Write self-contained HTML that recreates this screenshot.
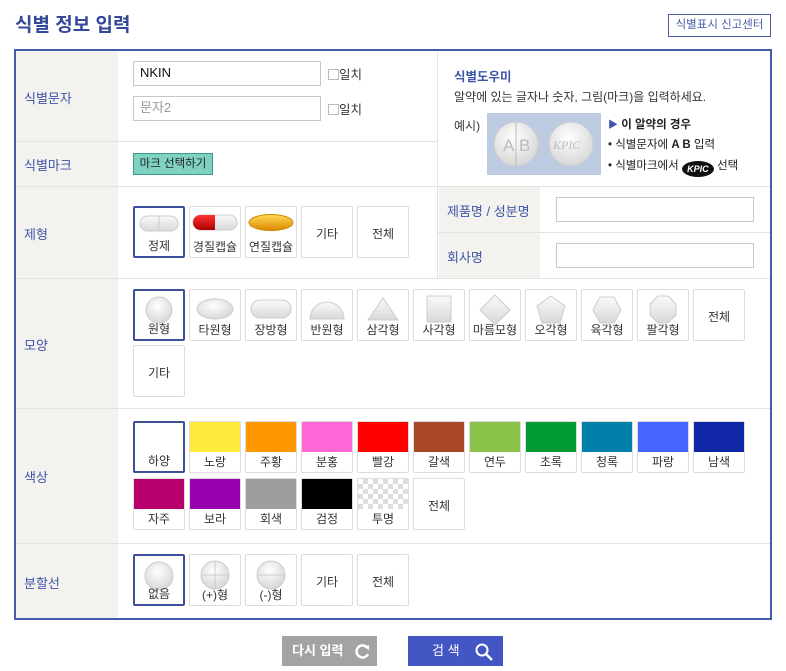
<!DOCTYPE html>
<html><head><meta charset="utf-8"><style>
*{margin:0;padding:0;box-sizing:border-box}
body{width:786px;height:671px;background:#fff;font-family:"Liberation Sans","Noto Sans CJK KR",sans-serif;position:relative;overflow:hidden;color:#333}
.a{position:absolute}
.lbl{position:absolute;left:24px;font-size:13px;color:#3d55a8}
.b{position:absolute;width:52px;height:52px;border:1px solid #dcdcdc;border-radius:2px;background:#fff;font-size:12px;color:#333;text-align:center}
.b.s{border:2px solid #3d4f9c}
.b .t{position:absolute;left:0;right:0;bottom:3px;line-height:14px}
.b .c{position:absolute;left:0;right:0;top:18px;font-size:12px}
.b svg{position:absolute;left:50%;top:4px;transform:translateX(-50%)}
.sw{position:absolute;left:0;right:0;top:0;height:30px}
.hl{position:absolute;height:1px;background:#e2e2e2}
.inp{position:absolute;border:1px solid #c8c8c8;background:#fff;font-size:13px;padding-left:6px;line-height:22px}
</style></head><body>
<svg width="0" height="0" style="position:absolute"><defs>
<radialGradient id="g" cx="45%" cy="35%" r="70%"><stop offset="0" stop-color="#fff"/><stop offset="1" stop-color="#d4d4d4"/></radialGradient>
<linearGradient id="lg" x1="0" y1="0" x2="0" y2="1"><stop offset="0" stop-color="#fafafa"/><stop offset="1" stop-color="#d8d8d8"/></linearGradient>
</defs></svg>

<div class="a" style="left:15px;top:10px;font-size:19px;font-weight:bold;color:#34499a">식별 정보 입력</div>
<div class="a" style="left:668px;top:14px;width:103px;height:23px;border:1px solid #4a5ea8;font-size:11.5px;color:#4a5ea8;text-align:center;line-height:21px">식별표시 신고센터</div>

<div class="a" style="left:14px;top:49px;width:758px;height:571px;border:2px solid #4559ad"></div>
<div class="a" style="left:16px;top:51px;width:102px;height:567px;background:#f4f2ee"></div>
<div class="a" style="left:439px;top:186px;width:101px;height:92px;background:#f4f2ee"></div>
<div class="a" style="left:437px;top:51px;width:1px;height:227px;background:#e2e2e2"></div>
<div class="hl" style="left:16px;top:141px;width:421px"></div>
<div class="hl" style="left:16px;top:186px;width:754px"></div>
<div class="hl" style="left:438px;top:232px;width:332px"></div>
<div class="hl" style="left:16px;top:278px;width:754px"></div>
<div class="hl" style="left:16px;top:408px;width:754px"></div>
<div class="hl" style="left:16px;top:543px;width:754px"></div>

<div class="lbl" style="top:88px">식별문자</div>
<div class="lbl" style="top:155px">식별마크</div>
<div class="lbl" style="top:224px">제형</div>
<div class="lbl" style="top:335px">모양</div>
<div class="lbl" style="top:467px">색상</div>
<div class="lbl" style="top:573px">분할선</div>

<div class="inp" style="left:133px;top:61px;width:188px;height:25px;color:#111">NKIN</div>
<div class="inp" style="left:133px;top:96px;width:188px;height:25px;color:#999">문자2</div>
<div class="a" style="left:328px;top:64px;font-size:12.5px"><span style="display:inline-block;width:11px;height:11px;border:1px solid #bbb;vertical-align:-1px"></span>일치</div>
<div class="a" style="left:328px;top:99px;font-size:12.5px"><span style="display:inline-block;width:11px;height:11px;border:1px solid #bbb;vertical-align:-1px"></span>일치</div>
<div class="a" style="left:133px;top:153px;width:80px;height:22px;background:#7fd1c2;border:1px solid #3a9a88;font-size:11.5px;line-height:20px;text-align:center;color:#222">마크 선택하기</div>

<div class="a" style="left:454px;top:66px;font-size:12.5px;font-weight:bold;color:#3d55a8">식별도우미</div>
<div class="a" style="left:454px;top:88px;font-size:12px;color:#333">알약에 있는 글자나 숫자, 그림(마크)을 입력하세요.</div>
<div class="a" style="left:454px;top:117px;font-size:12px">예시)</div>
<div class="a" style="left:487px;top:113px;width:114px;height:62px;background:#bccbe2">
<svg width="114" height="62"><circle cx="29" cy="31" r="22" fill="url(#g)" stroke="#ccc"/><line x1="29" y1="9" x2="29" y2="53" stroke="#bbb"/><text x="16" y="38" font-size="17" fill="#bbb" font-family="Liberation Sans">A</text><text x="32" y="38" font-size="17" fill="#bbb" font-family="Liberation Sans">B</text><circle cx="84" cy="31" r="22" fill="url(#g)" stroke="#ccc"/><text x="66" y="36" font-size="12" fill="#bbb" font-style="italic" font-family="Liberation Serif">KPIC</text></svg></div>
<div class="a" style="left:608px;top:116px;font-size:11.5px;font-weight:bold;color:#222"><span style="color:#3d55a8;font-size:10px">▶</span> 이 알약의 경우</div>
<div class="a" style="left:608px;top:136px;font-size:11.5px;color:#222">• 식별문자에 <b>A B</b> 입력</div>
<div class="a" style="left:608px;top:157px;font-size:11.5px;color:#222">• 식별마크에서 <span style="display:inline-block;width:32px;height:16px;background:#111;color:#fff;border-radius:50%;font-size:9px;font-style:italic;text-align:center;line-height:16px;vertical-align:-3px;font-weight:bold">KPIC</span> 선택</div>

<div class="a" style="left:447px;top:201px;font-size:13px;color:#3d55a8">제품명 / 성분명</div>
<div class="a" style="left:447px;top:247px;font-size:13px;color:#3d55a8">회사명</div>
<div class="inp" style="left:556px;top:197px;width:198px;height:25px"></div>
<div class="inp" style="left:556px;top:243px;width:198px;height:25px"></div>

<!-- 제형 -->
<div class="b s" style="left:133px;top:206px"><svg width="42" height="22"><rect x="2" y="4" width="38" height="15" rx="7.5" fill="url(#lg)" stroke="#ccc"/><line x1="21" y1="4" x2="21" y2="19" stroke="#ccc"/></svg><div class="t">정제</div></div>
<div class="b" style="left:189px;top:206px"><svg width="48" height="22"><defs><linearGradient id="r" x1="0" y1="0" x2="0" y2="1"><stop offset="0" stop-color="#f33"/><stop offset="1" stop-color="#a00"/></linearGradient></defs><rect x="2" y="4" width="44" height="15" rx="7.5" fill="url(#lg)" stroke="#ccc"/><path d="M9.5 4H24V19H9.5A7.5 7.5 0 0 1 9.5 4Z" fill="url(#r)"/></svg><div class="t">경질캡슐</div></div>
<div class="b" style="left:245px;top:206px"><svg width="48" height="22"><defs><linearGradient id="y" x1="0" y1="0" x2="0" y2="1"><stop offset="0" stop-color="#fd5"/><stop offset="1" stop-color="#d80"/></linearGradient></defs><ellipse cx="24" cy="11.5" rx="22" ry="8" fill="url(#y)" stroke="#c80"/></svg><div class="t">연질캡슐</div></div>
<div class="b" style="left:301px;top:206px"><div class="c">기타</div></div>
<div class="b" style="left:357px;top:206px"><div class="c">전체</div></div>

<!-- 모양 -->
<div class="b s" style="left:133px;top:289px"><svg width="30" height="30"><ellipse cx="15" cy="15" rx="13" ry="13" fill="url(#g)" stroke="#ccc"/></svg><div class="t">원형</div></div>
<div class="b" style="left:189px;top:289px"><svg width="40" height="30"><ellipse cx="20" cy="15" rx="18" ry="10" fill="url(#g)" stroke="#ccc"/></svg><div class="t">타원형</div></div>
<div class="b" style="left:245px;top:289px"><svg width="44" height="30"><rect x="2" y="6" width="40" height="18" rx="9" fill="url(#lg)" stroke="#ccc"/></svg><div class="t">장방형</div></div>
<div class="b" style="left:301px;top:289px"><svg width="40" height="30"><path d="M3 25A17 17 0 0 1 37 25Z" fill="url(#lg)" stroke="#ccc"/></svg><div class="t">반원형</div></div>
<div class="b" style="left:357px;top:289px"><svg width="34" height="30"><path d="M17 4L32 26H2Z" fill="url(#lg)" stroke="#ccc"/></svg><div class="t">삼각형</div></div>
<div class="b" style="left:413px;top:289px"><svg width="30" height="30"><rect x="3" y="2" width="24" height="26" fill="url(#lg)" stroke="#ccc"/></svg><div class="t">사각형</div></div>
<div class="b" style="left:469px;top:289px"><svg width="34" height="32"><path d="M17 1L32 16L17 31L2 16Z" fill="url(#lg)" stroke="#ccc"/></svg><div class="t">마름모형</div></div>
<div class="b" style="left:525px;top:289px"><svg width="34" height="32"><path d="M17 2L31 12L26 29H8L3 12Z" fill="url(#lg)" stroke="#ccc"/></svg><div class="t">오각형</div></div>
<div class="b" style="left:581px;top:289px"><svg width="34" height="32"><path d="M10 3H24L31 16L24 29H10L3 16Z" fill="url(#lg)" stroke="#ccc"/></svg><div class="t">육각형</div></div>
<div class="b" style="left:637px;top:289px"><svg width="32" height="32"><path d="M11 2H21L29 10V21L21 29H11L3 21V10Z" fill="url(#lg)" stroke="#ccc"/></svg><div class="t">팔각형</div></div>
<div class="b" style="left:693px;top:289px"><div class="c">전체</div></div>
<div class="b" style="left:133px;top:345px"><div class="c">기타</div></div>

<!-- 색상 -->
<div class="b s" style="left:133px;top:421px"><div class="t">하양</div></div>
<div class="b" style="left:189px;top:421px"><div class="sw" style="background:#ffeb3b"></div><div class="t">노랑</div></div>
<div class="b" style="left:245px;top:421px"><div class="sw" style="background:#ff9800"></div><div class="t">주황</div></div>
<div class="b" style="left:301px;top:421px"><div class="sw" style="background:#ff66d6"></div><div class="t">분홍</div></div>
<div class="b" style="left:357px;top:421px"><div class="sw" style="background:#ff0000"></div><div class="t">빨강</div></div>
<div class="b" style="left:413px;top:421px"><div class="sw" style="background:#a84727"></div><div class="t">갈색</div></div>
<div class="b" style="left:469px;top:421px"><div class="sw" style="background:#8bc34a"></div><div class="t">연두</div></div>
<div class="b" style="left:525px;top:421px"><div class="sw" style="background:#009933"></div><div class="t">초록</div></div>
<div class="b" style="left:581px;top:421px"><div class="sw" style="background:#0080a8"></div><div class="t">청록</div></div>
<div class="b" style="left:637px;top:421px"><div class="sw" style="background:#4466ff"></div><div class="t">파랑</div></div>
<div class="b" style="left:693px;top:421px"><div class="sw" style="background:#1027a8"></div><div class="t">남색</div></div>
<div class="b" style="left:133px;top:478px"><div class="sw" style="background:#b5006e"></div><div class="t">자주</div></div>
<div class="b" style="left:189px;top:478px"><div class="sw" style="background:#9900b0"></div><div class="t">보라</div></div>
<div class="b" style="left:245px;top:478px"><div class="sw" style="background:#9e9e9e"></div><div class="t">회색</div></div>
<div class="b" style="left:301px;top:478px"><div class="sw" style="background:#000"></div><div class="t">검정</div></div>
<div class="b" style="left:357px;top:478px"><div class="sw" style="background-color:#fff;background-image:linear-gradient(45deg,#ddd 25%,transparent 25%,transparent 75%,#ddd 75%),linear-gradient(45deg,#ddd 25%,transparent 25%,transparent 75%,#ddd 75%);background-size:10px 10px;background-position:0 0,5px 5px"></div><div class="t">투명</div></div>
<div class="b" style="left:413px;top:478px"><div class="c">전체</div></div>

<!-- 분할선 -->
<div class="b s" style="left:133px;top:554px"><svg width="32" height="32"><circle cx="16" cy="16" r="14" fill="url(#g)" stroke="#ccc"/></svg><div class="t">없음</div></div>
<div class="b" style="left:189px;top:554px"><svg width="32" height="32"><circle cx="16" cy="16" r="14" fill="url(#g)" stroke="#ccc"/><path d="M16 2V30M2 16H30" stroke="#ccc"/></svg><div class="t">(+)형</div></div>
<div class="b" style="left:245px;top:554px"><svg width="32" height="32"><circle cx="16" cy="16" r="14" fill="url(#g)" stroke="#ccc"/><path d="M2 16H30" stroke="#ccc"/></svg><div class="t">(-)형</div></div>
<div class="b" style="left:301px;top:554px"><div class="c">기타</div></div>
<div class="b" style="left:357px;top:554px"><div class="c">전체</div></div>

<div class="a" style="left:282px;top:636px;width:95px;height:30px;background:#a3a3a3;color:#fff;font-size:13px;line-height:30px;padding-left:10px;font-weight:bold">다시 입력
<svg class="a" style="left:72px;top:7px" width="17" height="17"><path d="M13.5 5A6 6 0 1 0 14 11" fill="none" stroke="#fff" stroke-width="2.5"/><path d="M10 4L15 2L15 7Z" fill="#fff"/></svg></div>
<div class="a" style="left:408px;top:636px;width:95px;height:30px;background:#4357c4;color:#fff;font-size:13px;line-height:30px;padding-left:24px">검 색
<svg class="a" style="left:66px;top:6px" width="20" height="20"><circle cx="8" cy="8" r="5.5" fill="none" stroke="#fff" stroke-width="2"/><path d="M12 12L18 18" stroke="#fff" stroke-width="2.5"/></svg></div>
</body></html>
